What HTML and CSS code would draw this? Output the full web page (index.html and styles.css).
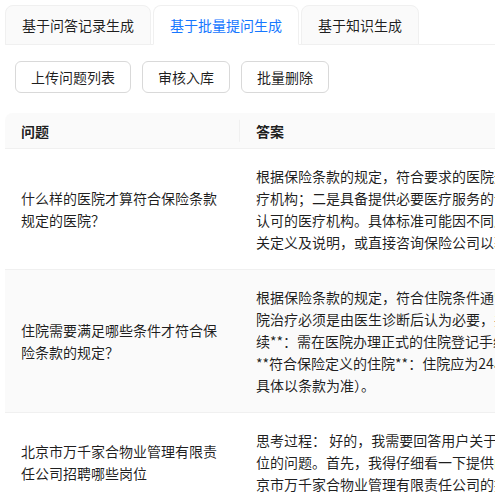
FILE: index.html
```html
<!DOCTYPE html>
<html lang="zh-CN">
<head>
  <meta charset="UTF-8" />
  <title>批量提问生成</title>
  <link rel="stylesheet" href="styles.css">
</head>
<body>
  <div class="page">
    <div class="tabs">
      <div class="tab">基于问答记录生成</div>
      <div class="tab active">基于批量提问生成</div>
      <div class="tab">基于知识生成</div>
    </div>

    <div class="toolbar">
      <button class="btn">上传问题列表</button>
      <button class="btn">审核入库</button>
      <button class="btn">批量删除</button>
    </div>

    <div class="table-wrap">
      <table class="qa-table">
        <colgroup>
          <col class="col-question">
          <col class="col-answer">
        </colgroup>
        <thead>
          <tr>
            <th>问题</th>
            <th>答案</th>
          </tr>
        </thead>
        <tbody>
          <tr>
            <td>什么样的医院才算符合保险条款规定的医院？</td>
            <td class="answer">根据保险条款的规定，符合要求的医院通常需具备：一是正规医<br>疗机构；二是具备提供必要医疗服务的设施与人员；三是经国家<br>认可的医疗机构。具体标准可能因不同产品有所差异，请查阅相<br>关定义及说明，或直接咨询保险公司以获取准确信息。</td>
          </tr>
          <tr class="hover">
            <td>住院需要满足哪些条件才符合保险条款的规定？</td>
            <td class="answer">根据保险条款的规定，符合住院条件通常需要满足以下条件，住<br>院治疗必须是由医生诊断后认为必要，并且需要办理正式入院手<br>续**：需在医院办理正式的住院登记手续。3.<br>**符合保险定义的住院**：住院应为24小时以上（部分产品另有约定，<br>具体以条款为准）。</td>
          </tr>
          <tr>
            <td>北京市万千家合物业管理有限责任公司招聘哪些岗位</td>
            <td class="answer">思考过程： 好的，我需要回答用户关于北京市万千家合物业招聘岗<br>位的问题。首先，我得仔细看一下提供的资料，看看里面有没有北<br>京市万千家合物业管理有限责任公司的招聘信息。</td>
          </tr>
        </tbody>
      </table>
    </div>
  </div>
</body>
</html>
```

FILE: styles.css
```css
body {
  margin: 0;
  background-color: #fff;
  color: rgba(0, 0, 0, 0.88);
  font-family: "Noto Sans CJK SC", "Noto Sans", sans-serif;
  font-size: 14px;
}

.page {
  padding: 5px;
}

.tabs {
  display: flex;
  gap: 2px;
  border-bottom: 1px solid #f0f0f0;
  margin-bottom: 16px;
}

.tab {
  padding: 8px 16px;
  line-height: 22px;
  background-color: #fafafa;
  border: 1px solid #f0f0f0;
  border-radius: 8px 8px 0 0;
  margin-bottom: -1px;
  cursor: pointer;
}

.tab.active {
  background-color: #fff;
  border-bottom-color: #fff;
  color: #1677ff;
}

.toolbar {
  display: flex;
  gap: 11px;
  padding: 0 10px;
  margin-bottom: 20px;
}

.btn {
  height: 32px;
  padding: 4px 15px;
  font: inherit;
  line-height: 22px;
  color: inherit;
  background-color: #fff;
  border: 1px solid #d9d9d9;
  border-radius: 6px;
  cursor: pointer;
}

.table-wrap {
  overflow: hidden;
}

.qa-table {
  width: 680px;
  table-layout: fixed;
  border-collapse: separate;
  border-spacing: 0;
}

.col-question {
  width: 235px;
}

.col-answer {
  width: 445px;
}

.qa-table th {
  position: relative;
  padding: 7px 16px 6px;
  line-height: 22px;
  text-align: left;
  font-weight: 600;
  background-color: #fafafa;
  border-bottom: 1px solid #f0f0f0;
}

.qa-table th:first-child {
  border-top-left-radius: 8px;
}

.qa-table th:first-child::before {
  content: "";
  position: absolute;
  top: 50%;
  right: 0;
  width: 1px;
  height: 1.6em;
  background-color: #f0f0f0;
  transform: translateY(-50%);
}

.qa-table td {
  padding: 16px;
  line-height: 22px;
  vertical-align: middle;
  border-bottom: 1px solid #f0f0f0;
}

.qa-table .answer {
  white-space: nowrap;
  overflow: hidden;
}

.qa-table tr.hover td {
  background-color: #fafafa;
}
```
